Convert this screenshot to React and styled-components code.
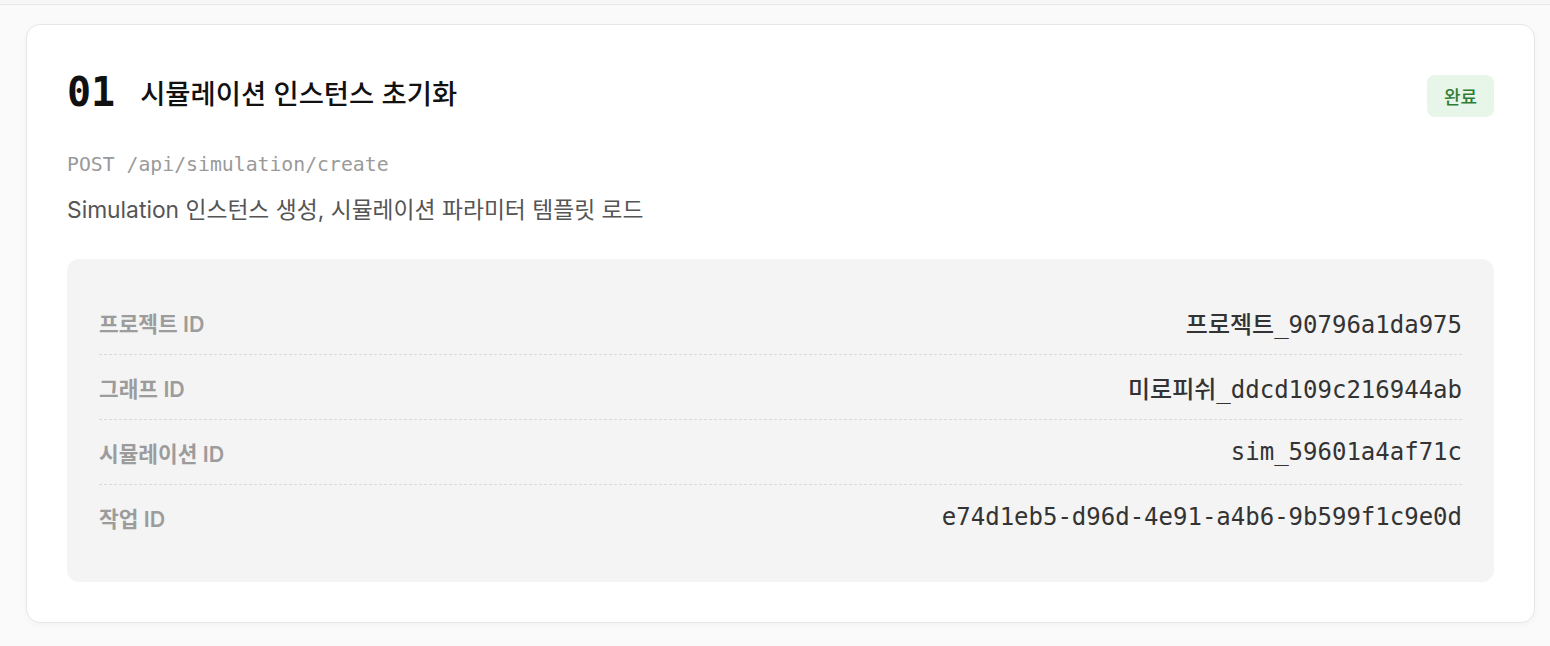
import React from "react"
import styled, { createGlobalStyle } from "styled-components"

const GlobalStyle = createGlobalStyle`
  body {
    margin: 0;
    background: #fafafa;
    font-family: Inter, "Noto Sans CJK KR", sans-serif;
  }
`

const MONO = `"DejaVu Sans Mono", "Noto Sans CJK KR", monospace`

const rows = [
  { label: "프로젝트 ID", value: "프로젝트_90796a1da975" },
  { label: "그래프 ID", value: "미로피쉬_ddcd109c216944ab" },
  { label: "시뮬레이션 ID", value: "sim_59601a4af71c" },
  { label: "작업 ID", value: "e74d1eb5-d96d-4e91-a4b6-9b599f1c9e0d" },
]

export default function App() {
  return (
    <>
      <GlobalStyle />
      <TopEdge />
      <Page>
        <Card>
          <Header>
            <TitleGroup>
              <StepNumber>01</StepNumber>
              <Title>시뮬레이션 인스턴스 초기화</Title>
            </TitleGroup>
            <Badge>완료</Badge>
          </Header>
          <Endpoint>POST /api/simulation/create</Endpoint>
          <Description>
            Simulation 인스턴스 생성, 시뮬레이션 파라미터 템플릿 로드
          </Description>
          <InfoBox>
            {rows.map(row => (
              <InfoRow key={row.label}>
                <Label>{row.label}</Label>
                <Value>{row.value}</Value>
              </InfoRow>
            ))}
          </InfoBox>
        </Card>
      </Page>
    </>
  )
}

const TopEdge = styled.div`
  height: 4px;
  background: #f6f6f6;
  border-bottom: 1px solid #e8e8e8;
`

const Page = styled.div`
  padding: 19px 15px 24px 26px;
`

const Card = styled.div`
  background: #fff;
  border: 1px solid #e6e6e6;
  border-radius: 14px;
  box-shadow: 0 2px 6px rgba(0, 0, 0, 0.03);
  padding: 40px;
`

const Header = styled.div`
  display: flex;
  justify-content: space-between;
  align-items: flex-start;
  height: 62px;
`

const TitleGroup = styled.div`
  display: flex;
  align-items: center;
  gap: 25px;
  height: 54px;
`

const StepNumber = styled.span`
  font-family: ${MONO};
  font-size: 40px;
  font-weight: 700;
  color: #111;
`

const Title = styled.h2`
  margin: 0;
  font-size: 27.4px;
  font-weight: 500;
  color: #111;
`

const Badge = styled.span`
  display: inline-flex;
  align-items: center;
  justify-content: center;
  width: 67px;
  height: 42px;
  margin-top: 10px;
  border-radius: 8px;
  background: #e8f5e9;
  color: #2e7d32;
  font-size: 18px;
  font-weight: 500;
`

const Endpoint = styled.div`
  margin-top: 26px;
  font-family: ${MONO};
  font-size: 19.8px;
  color: #9a9a9a;
`

const Description = styled.p`
  margin: 16px 0 0;
  font-size: 22.8px;
  color: #555;
`

const InfoBox = styled.div`
  margin-top: 34px;
  background: #f4f4f4;
  border-radius: 12px;
  padding: 31px 32px 33px;
`

const InfoRow = styled.div`
  display: flex;
  justify-content: space-between;
  align-items: center;
  height: 64px;
  border-bottom: 1px dashed #d9d9d9;

  &:last-child {
    border-bottom: none;
  }
`

const Label = styled.span`
  font-size: 21.4px;
  font-weight: 600;
  color: #9c9c9c;
`

const Value = styled.span`
  font-family: ${MONO};
  font-size: 24px;
  font-weight: 500;
  color: #333;
`
